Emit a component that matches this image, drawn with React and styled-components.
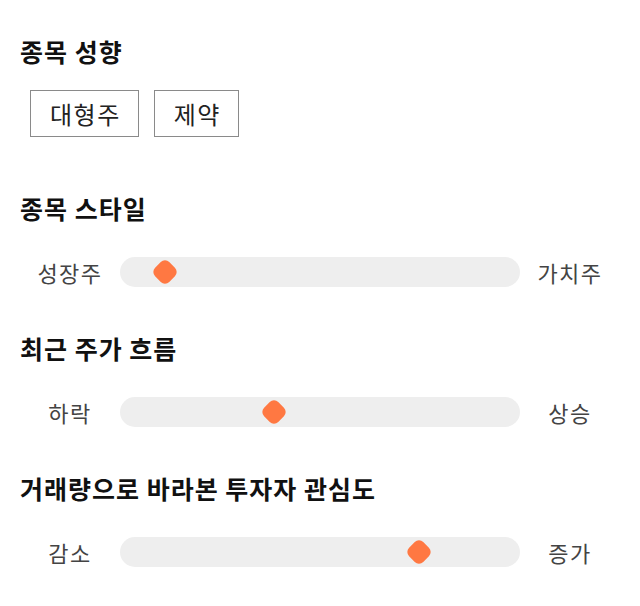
import styled, { createGlobalStyle } from "styled-components";

const GlobalStyle = createGlobalStyle`
    body {
        margin: 0;
        background: #fff;
        font-family: "Noto Sans CJK KR", "Noto Sans", sans-serif;
    }
`;

const Container = styled.div`
    padding: 36px 20px 20px 20px;
`;

const Section = styled.div`
    margin-top: ${(props) => props.$gap}px;
`;

const Title = styled.h2`
    margin: 0;
    font-size: 25px;
    line-height: 30px;
    letter-spacing: 1px;
    font-weight: bold;
    color: #111;
`;

const TagList = styled.div`
    display: flex;
    gap: 15px;
    margin-top: 24px;
    padding-left: 10px;
`;

const Tag = styled.div`
    height: 47px;
    box-sizing: border-box;
    padding: 0 17px 0 19px;
    border: 1px solid #8a8a8a;
    display: flex;
    align-items: center;
    font-size: 24px;
    letter-spacing: 1.5px;
    color: #222;
`;

const SliderRow = styled.div`
    display: grid;
    grid-template-columns: 100px 400px 100px;
    align-items: center;
    margin-top: 33px;
    height: 30px;
`;

const Label = styled.span`
    text-align: center;
    font-size: 22px;
    letter-spacing: 1.5px;
    color: #444;
`;

const Track = styled.div`
    position: relative;
    height: 30px;
    background: #eeeeee;
    border-radius: 15px;
`;

const Thumb = styled.div`
    position: absolute;
    top: 5px;
    width: 20px;
    height: 20px;
    margin-left: 4px;
    background: #ff7842;
    border-radius: 6px;
    transform: rotate(45deg);
`;

const tags = ["대형주", "제약"];

const sliders = [
    { title: "종목 스타일", left: "성장주", right: "가치주", value: 31 },
    { title: "최근 주가 흐름", left: "하락", right: "상승", value: 140 },
    { title: "거래량으로 바라본 투자자 관심도", left: "감소", right: "증가", value: 285 },
];

const App = () => {
    return (
        <Container>
            <GlobalStyle />
            <Section $gap={0}>
                <Title>종목 성향</Title>
                <TagList>
                    {tags.map((tag) => (
                        <Tag key={tag}>{tag}</Tag>
                    ))}
                </TagList>
            </Section>
            {sliders.map((item, index) => (
                <Section key={item.title} $gap={index === 0 ? 56 : 47}>
                    <Title>{item.title}</Title>
                    <SliderRow>
                        <Label>{item.left}</Label>
                        <Track>
                            <Thumb style={{ left: item.value }} />
                        </Track>
                        <Label>{item.right}</Label>
                    </SliderRow>
                </Section>
            ))}
        </Container>
    );
};

export default App;
